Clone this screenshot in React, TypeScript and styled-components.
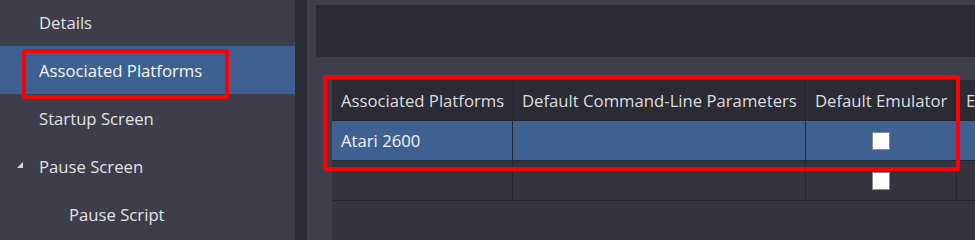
import React from "react";
import styled, { createGlobalStyle } from "styled-components";

const GlobalStyle = createGlobalStyle`
  html, body {
    margin: 0;
    padding: 0;
    background: #3e3f4b;
    overflow: hidden;
  }
  body {
    font-family: "Open Sans", "Noto Sans", sans-serif;
  }
`;

const Layout = styled.div`
  display: flex;
  width: 975px;
  height: 240px;
  overflow: hidden;
`;

const Sidebar = styled.nav`
  width: 295px;
  flex-shrink: 0;
  background: #3d3e4a;
  margin-top: -2px;
`;

const NavItem = styled.div<{ selected?: boolean; indent?: number }>`
  position: relative;
  height: 48px;
  display: flex;
  align-items: center;
  padding-left: ${(props) => 39 + (props.indent || 0)}px;
  background: ${(props) => (props.selected ? "#3f6191" : "transparent")};
  color: ${(props) => (props.selected ? "#f6f6f6" : "#e2e2e2")};
  font-size: 16.7px;
`;

const Expander = styled.svg`
  position: absolute;
  left: 17px;
  top: 20px;
`;

const Highlight = styled.div<{
  left: number;
  top: number;
  width: number;
  height: number;
}>`
  position: absolute;
  left: ${(props) => props.left}px;
  top: ${(props) => props.top}px;
  width: ${(props) => props.width}px;
  height: ${(props) => props.height}px;
  box-sizing: border-box;
  border: 4px solid #ff0000;
  border-radius: 2px;
  pointer-events: none;
  z-index: 2;
`;

const Splitter = styled.div`
  width: 12px;
  flex-shrink: 0;
  background: #2a2b33;
`;

const Main = styled.main`
  flex: 1;
  min-width: 0;
  background: #3e3f4b;
  padding: 5px 0 0 9px;
  display: flex;
  flex-direction: column;
`;

const TopBox = styled.div`
  height: 52px;
  background: #2a2b34;
`;

const GridWrap = styled.div`
  position: relative;
  margin: 23px 0 0 16px;
  background: #33343f;
  flex: 1;
`;

const Row = styled.div<{ selected?: boolean; header?: boolean }>`
  display: grid;
  grid-template-columns: 181px 293px 151px 200px;
  height: ${(props) => (props.header ? 41 : 40)}px;
  background: ${(props) =>
    props.header ? "#2a2b35" : props.selected ? "#3f6191" : "transparent"};
  border-bottom: 1px solid #24252d;
  box-sizing: border-box;
`;

const Cell = styled.div<{ center?: boolean; header?: boolean }>`
  display: flex;
  align-items: center;
  justify-content: ${(props) => (props.center ? "center" : "flex-start")};
  padding-left: ${(props) => (props.center ? 0 : 9)}px;
  border-right: 1px solid #24252d;
  color: ${(props) => (props.header ? "#dedede" : "#f4f4f4")};
  font-size: 16.7px;
  white-space: nowrap;
  overflow: hidden;
`;

const CheckBox = styled.span`
  width: 18px;
  height: 18px;
  box-sizing: border-box;
  background: #ffffff;
  border: 1px solid #8a8a8a;
`;

const columns = [
  "Associated Platforms",
  "Default Command-Line Parameters",
  "Default Emulator",
  "Emulator",
];

export default function App() {
  return (
    <>
      <GlobalStyle />
      <Layout>
        <Sidebar>
          <NavItem>Details</NavItem>
          <NavItem selected>
            Associated Platforms
            <Highlight left={22} top={3} width={207} height={50} />
          </NavItem>
          <NavItem>Startup Screen</NavItem>
          <NavItem>
            <Expander width="6" height="6" viewBox="0 0 6 6">
              <polygon points="6,0 6,6 0,6" fill="#d8d8d8" />
            </Expander>
            Pause Screen
          </NavItem>
          <NavItem indent={30}>Pause Script</NavItem>
        </Sidebar>
        <Splitter />
        <Main>
          <TopBox />
          <GridWrap>
            <Row header>
              {columns.map((c) => (
                <Cell header key={c}>
                  {c}
                </Cell>
              ))}
            </Row>
            <Row selected>
              <Cell>Atari 2600</Cell>
              <Cell />
              <Cell center>
                <CheckBox />
              </Cell>
              <Cell />
            </Row>
            <Row>
              <Cell />
              <Cell />
              <Cell center>
                <CheckBox />
              </Cell>
              <Cell />
            </Row>
            <Highlight left={-9} top={-5} width={637} height={96} />
          </GridWrap>
        </Main>
      </Layout>
    </>
  );
}
